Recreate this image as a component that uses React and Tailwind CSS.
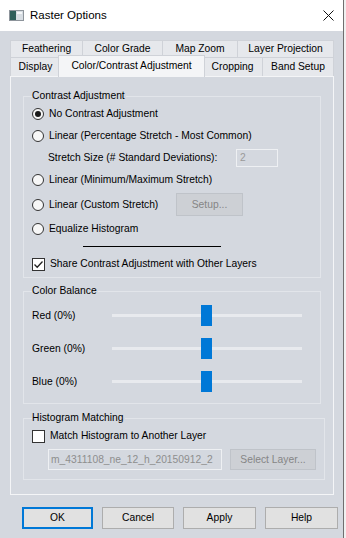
import React from "react";

const FONT = "font-['Liberation_Sans',Arial,sans-serif]";

function Radio({ label, checked }) {
  return (
    <div className="flex items-center gap-[5px]">
      <span className="flex h-[12px] w-[12px] items-center justify-center rounded-full border border-[#333] bg-[#f7f7f7]">
        {checked && <span className="h-[6px] w-[6px] rounded-full bg-[#1a1a1a]" />}
      </span>
      <span>{label}</span>
    </div>
  );
}

function Check({ label, checked }) {
  return (
    <div className="flex items-center gap-[5px]">
      <span className="flex h-[13px] w-[13px] items-center justify-center border border-[#333] bg-white">
        {checked && (
          <svg width="11" height="11" viewBox="0 0 11 11">
            <path d="M1.5 5.5 L4.2 8.3 L9.5 2.5" fill="none" stroke="#222" strokeWidth="1.3" />
          </svg>
        )}
      </span>
      <span>{label}</span>
    </div>
  );
}

function Group({ title, children, className = "" }) {
  return (
    <fieldset className={`border border-[#e2e5ea] px-[8px] ${className}`}>
      <legend className="leading-[14px] pr-[1px]">{title}</legend>
      {children}
    </fieldset>
  );
}

function Slider({ label }) {
  return (
    <div className="flex h-[33px] items-center">
      <span className="w-[80px]">{label}</span>
      <div className="relative flex h-[21px] w-[190px] items-center">
        <div className="h-[3px] w-full bg-[#e8eaee]" />
        <div className="absolute left-[89px] top-0 h-[21px] w-[11px] bg-[#0078d7]" />
      </div>
    </div>
  );
}

const row1 = [
  ["Feathering", "w-[72px]"],
  ["Color Grade", "w-[80px]"],
  ["Map Zoom", "w-[75px]"],
  ["Layer Projection", "w-[97px]"],
];

export default function App() {
  return (
    <div className={`flex h-[538px] w-[346px] bg-white text-[10.3px] text-black ${FONT}`}>
      <div className="flex h-full w-[343px] flex-col bg-[#d4d8df]">
        {/* Title bar */}
        <div className="flex h-[31px] items-center bg-white pl-[9px] pr-[9px]">
          <svg width="15" height="11" viewBox="0 0 15 11">
            <rect x="0.5" y="0.5" width="14" height="10" fill="#d7dde3" stroke="#8d949b" />
            <rect x="1" y="1" width="6" height="9" fill="#2f5f5b" />
            <rect x="8" y="2" width="5" height="2" fill="#f5f7f9" />
          </svg>
          <span className="ml-[6px] text-[11.5px]">Raster Options</span>
          <svg className="ml-auto" width="11" height="11" viewBox="0 0 11 11">
            <path d="M0.5 0.5 L10.5 10.5 M10.5 0.5 L0.5 10.5" stroke="#111" strokeWidth="1" />
          </svg>
        </div>

        {/* Tabs */}
        <div className="ml-[10px] mt-[9px] w-[324px]">
          <div className="flex h-[17px]">
            {row1.map(([t, w]) => (
              <div key={t} className={`${w} flex items-center justify-center border-l border-t border-[#cfd2d8] bg-[#e6e8ec] last:border-r`}>
                {t}
              </div>
            ))}
          </div>
          <div className="flex h-[19px]">
            <div className="flex w-[50px] items-center justify-center border-l border-t border-[#cfd2d8] bg-[#e6e8ec]">Display</div>
            <div className="relative z-10 -mx-[2px] -mt-[2px] flex h-[22px] w-[147px] items-center justify-center border-x border-t border-[#cfd2d8] bg-[#f4f5f7] pb-[2px]">
              Color/Contrast Adjustment
            </div>
            <div className="flex w-[59px] items-center justify-center border-t border-[#cfd2d8] bg-[#e6e8ec]">Cropping</div>
            <div className="flex w-[72px] items-center justify-center border-x border-t border-[#cfd2d8] bg-[#e6e8ec]">Band Setup</div>
          </div>

          {/* Panel */}
          <div className="border border-[#f4f5f7] bg-[#d4d8df] px-[12px] pb-[14px] pt-[12px]">
            <Group title="Contrast Adjustment" className="pb-[2px]">
              <div className="flex h-[22px] items-center"><Radio label="No Contrast Adjustment" checked /></div>
              <div className="flex h-[22px] items-center"><Radio label="Linear (Percentage Stretch - Most Common)" /></div>
              <div className="flex h-[22px] items-center pl-[16px]">
                <span className="w-[188px]">Stretch Size (# Standard Deviations):</span>
                <div className="flex h-[18px] w-[42px] items-center border border-[#eef0f3] px-[3px] text-[#9a9a9a]">2</div>
              </div>
              <div className="flex h-[22px] items-center"><Radio label="Linear (Minimum/Maximum Stretch)" /></div>
              <div className="flex h-[27px] items-center">
                <div className="w-[144px]"><Radio label="Linear (Custom Stretch)" /></div>
                <div className="flex h-[23px] w-[67px] items-center justify-center border border-[#bfc3c9] bg-[#cdd0d5] text-[#858585]">
                  Setup...
                </div>
              </div>
              <div className="flex h-[22px] items-center"><Radio label="Equalize Histogram" /></div>
              <div className="flex h-[13px] items-center pl-[51px]">
                <div className="h-px w-[138px] bg-black" />
              </div>
              <div className="flex h-[22px] items-center"><Check label="Share Contrast Adjustment with Other Layers" checked /></div>
            </Group>

            <Group title="Color Balance" className="mt-[6px] pb-[5px] pt-[1px]">
              <Slider label="Red (0%)" />
              <Slider label="Green (0%)" />
              <Slider label="Blue (0%)" />
            </Group>

            <Group title="Histogram Matching" className="mt-[7px] pb-[9px]">
              <div className="flex h-[22px] items-center"><Check label="Match Histogram to Another Layer" /></div>
              <div className="mt-[2px] flex gap-[8px] pl-[16px]">
                <div className="flex h-[21px] w-[174px] items-center overflow-hidden whitespace-nowrap border border-[#eef0f3] px-[2px] text-[#8e8e8e]">
                  m_4311108_ne_12_h_20150912_2
                </div>
                <div className="flex h-[21px] w-[86px] items-center justify-center border border-[#bfc3c9] bg-[#cdd0d5] text-[#858585]">
                  Select Layer...
                </div>
              </div>
            </Group>
          </div>
        </div>

        {/* Dialog buttons */}
        <div className="mt-[12px] flex gap-[9px] pl-[22px]">
          <div className="flex h-[22px] w-[71px] items-center justify-center border-2 border-[#0078d7] bg-[#e1e1e1]">OK</div>
          <div className="flex h-[22px] w-[72px] items-center justify-center border border-[#adadad] bg-[#e1e1e1]">Cancel</div>
          <div className="flex h-[22px] w-[73px] items-center justify-center border border-[#adadad] bg-[#e1e1e1]">Apply</div>
          <div className="flex h-[22px] w-[73px] items-center justify-center border border-[#adadad] bg-[#e1e1e1]">Help</div>
        </div>
      </div>
      <div className="w-px bg-[#6f6f6f]" />
      <div className="flex-1 bg-[#f0f0f0]" />
    </div>
  );
}
